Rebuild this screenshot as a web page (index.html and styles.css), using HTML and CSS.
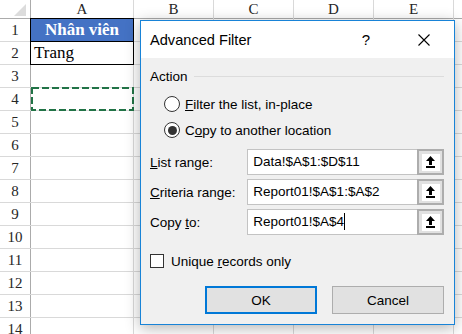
FILE: index.html
```html
<!DOCTYPE html>
<html lang="en">
<head>
  <meta charset="UTF-8">
  <title>Advanced Filter</title>
  <link rel="stylesheet" href="styles.css">
</head>
<body>

<div class="sheet">
  <div class="corner"><span class="corner-mark"></span></div>
  <div class="col-head">A</div>
  <div class="col-head">B</div>
  <div class="col-head">C</div>
  <div class="col-head">D</div>
  <div class="col-head">E</div>
  <div class="col-head"></div>

  <div class="row-head">1</div>
  <div class="cell cell-title">Nhân viên</div>
  <div class="cell"></div><div class="cell"></div><div class="cell"></div><div class="cell"></div><div class="cell"></div>

  <div class="row-head">2</div>
  <div class="cell cell-value">Trang</div>
  <div class="cell"></div><div class="cell"></div><div class="cell"></div><div class="cell"></div><div class="cell"></div>

  <div class="row-head">3</div>
  <div class="cell"></div><div class="cell"></div><div class="cell"></div><div class="cell"></div><div class="cell"></div><div class="cell"></div>

  <div class="row-head">4</div>
  <div class="cell cell-copy">
    <svg class="marquee" width="103" height="24" viewBox="0 0 103 24">
      <rect x="1" y="1" width="101" height="22" fill="none" stroke="#217346" stroke-width="2" stroke-dasharray="7 3"/>
    </svg>
  </div>
  <div class="cell"></div><div class="cell"></div><div class="cell"></div><div class="cell"></div><div class="cell"></div>

  <div class="row-head">5</div>
  <div class="cell"></div><div class="cell"></div><div class="cell"></div><div class="cell"></div><div class="cell"></div><div class="cell"></div>
  <div class="row-head">6</div>
  <div class="cell"></div><div class="cell"></div><div class="cell"></div><div class="cell"></div><div class="cell"></div><div class="cell"></div>
  <div class="row-head">7</div>
  <div class="cell"></div><div class="cell"></div><div class="cell"></div><div class="cell"></div><div class="cell"></div><div class="cell"></div>
  <div class="row-head">8</div>
  <div class="cell"></div><div class="cell"></div><div class="cell"></div><div class="cell"></div><div class="cell"></div><div class="cell"></div>
  <div class="row-head">9</div>
  <div class="cell"></div><div class="cell"></div><div class="cell"></div><div class="cell"></div><div class="cell"></div><div class="cell"></div>
  <div class="row-head">10</div>
  <div class="cell"></div><div class="cell"></div><div class="cell"></div><div class="cell"></div><div class="cell"></div><div class="cell"></div>
  <div class="row-head">11</div>
  <div class="cell"></div><div class="cell"></div><div class="cell"></div><div class="cell"></div><div class="cell"></div><div class="cell"></div>
  <div class="row-head">12</div>
  <div class="cell"></div><div class="cell"></div><div class="cell"></div><div class="cell"></div><div class="cell"></div><div class="cell"></div>
  <div class="row-head">13</div>
  <div class="cell"></div><div class="cell"></div><div class="cell"></div><div class="cell"></div><div class="cell"></div><div class="cell"></div>
  <div class="row-head">14</div>
  <div class="cell"></div><div class="cell"></div><div class="cell"></div><div class="cell"></div><div class="cell"></div><div class="cell"></div>

  <!-- Dialog over the sheet -->
  <div class="dialog">
    <div class="dialog-title">
      <span class="title-text">Advanced Filter</span>
      <span class="help">?</span>
      <svg class="close" width="12" height="12" viewBox="0 0 12 12">
        <path d="M0.5 0.5 L11.5 11.5 M11.5 0.5 L0.5 11.5" stroke="#000" stroke-width="1.1"/>
      </svg>
    </div>

    <div class="dialog-body">
      <div class="group-label">
        <span>Action</span>
        <span class="group-line"></span>
      </div>

      <label class="radio-row">
        <span class="radio"></span>
        <span><u>F</u>ilter the list, in-place</span>
      </label>
      <label class="radio-row">
        <span class="radio checked"></span>
        <span>C<u>o</u>py to another location</span>
      </label>

      <div class="fields">
        <div class="field">
          <span class="field-label"><u>L</u>ist range:</span>
          <span class="field-input">Data!$A$1:$D$11</span>
          <span class="pick-btn"><span class="pick-face">
            <svg width="9" height="12" viewBox="0 0 9 12"><path d="M4.5 0 L9 5 L0 5 Z M3 5 H6 V9 H3 Z M0 10 H9 V12 H0 Z" fill="#000"/></svg>
          </span></span>
        </div>
        <div class="field">
          <span class="field-label"><u>C</u>riteria range:</span>
          <span class="field-input">Report01!$A$1:$A$2</span>
          <span class="pick-btn"><span class="pick-face">
            <svg width="9" height="12" viewBox="0 0 9 12"><path d="M4.5 0 L9 5 L0 5 Z M3 5 H6 V9 H3 Z M0 10 H9 V12 H0 Z" fill="#000"/></svg>
          </span></span>
        </div>
        <div class="field">
          <span class="field-label">Copy <u>t</u>o:</span>
          <span class="field-input">Report01!$A$4<span class="caret"></span></span>
          <span class="pick-btn"><span class="pick-face">
            <svg width="9" height="12" viewBox="0 0 9 12"><path d="M4.5 0 L9 5 L0 5 Z M3 5 H6 V9 H3 Z M0 10 H9 V12 H0 Z" fill="#000"/></svg>
          </span></span>
        </div>
      </div>

      <label class="check-row">
        <span class="checkbox"></span>
        <span>Unique <u>r</u>ecords only</span>
      </label>

      <div class="buttons">
        <button class="btn btn-default">OK</button>
        <button class="btn">Cancel</button>
      </div>
    </div>
  </div>
</div>

</body>
</html>
```

FILE: styles.css
```css
* {
  margin: 0;
  padding: 0;
  box-sizing: border-box;
}

body {
  background: #fff;
  overflow: hidden;
  font-family: 'Liberation Sans', Arial, sans-serif;
}

/* Spreadsheet */
.sheet {
  position: relative;
  display: grid;
  grid-template-columns: 30px 102px 79px 79px 79px 79px 1fr;
  grid-auto-rows: 22px;
  grid-template-rows: 18px;
  gap: 1px;
  background: #d9d9d9;
  width: 462px;
  height: 334px;
  overflow: hidden;
  font-family: 'Liberation Serif', 'Times New Roman', serif;
}

.corner,
.col-head,
.row-head,
.cell {
  background: #fff;
}

.corner {
  display: flex;
  align-items: flex-end;
  justify-content: flex-end;
  padding: 0 4px 2px 0;
  box-shadow: 0 1px 0 #ababab, 1px 0 0 #ababab;
}

.corner-mark {
  width: 0;
  height: 0;
  border-left: 12px solid transparent;
  border-bottom: 12px solid #dcdcdc;
}

.col-head {
  font-size: 15px;
  color: #262626;
  text-align: center;
  line-height: 18px;
  box-shadow: 0 1px 0 #ababab;
}

.row-head {
  font-size: 15px;
  color: #262626;
  text-align: center;
  line-height: 22px;
  box-shadow: 1px 0 0 #ababab;
}

.cell {
  font-size: 17px;
  line-height: 22px;
  color: #000;
  white-space: nowrap;
}

.cell-title {
  background: #4472c4;
  color: #fff;
  font-weight: bold;
  text-align: center;
  box-shadow: 0 0 0 1px #000;
}

.cell-value {
  padding-left: 3px;
  box-shadow: 0 0 0 1px #000;
}

.cell-copy {
  position: relative;
}

.marquee {
  position: absolute;
  left: 0;
  top: -1px;
}

/* Dialog */
.dialog {
  position: absolute;
  left: 140px;
  top: 20px;
  width: 315px;
  height: 305px;
  border: 1px solid #1883d7;
  background: #f0f0f0;
  box-shadow: 0 3px 14px rgba(0, 0, 0, 0.3);
  font-family: 'Liberation Sans', Arial, sans-serif;
  font-size: 13.5px;
  color: #000;
}

.dialog-title {
  height: 37px;
  background: #fff;
  display: flex;
  align-items: center;
  padding-left: 9px;
}

.title-text {
  font-size: 14.6px;
  flex: 1;
}

.help {
  font-size: 15px;
  margin-right: 48px;
}

.close {
  margin-right: 24px;
}

.dialog-body {
  display: flex;
  flex-direction: column;
  padding: 9px 10px 0 9px;
}

.group-label {
  display: flex;
  align-items: center;
  height: 18px;
}

.group-line {
  flex: 1;
  height: 1px;
  background: #dcdcdc;
  margin-left: 6px;
}

.radio-row {
  display: flex;
  align-items: center;
  height: 26px;
  padding-left: 14px;
}

.group-label + .radio-row {
  margin-top: 6px;
}

.radio {
  width: 16px;
  height: 16px;
  border: 1px solid #333;
  border-radius: 50%;
  background: #fff;
  margin-right: 5px;
  display: flex;
  align-items: center;
  justify-content: center;
}

.radio.checked::after {
  content: '';
  width: 9px;
  height: 9px;
  border-radius: 50%;
  background: #333;
}

.fields {
  display: flex;
  flex-direction: column;
  gap: 4px;
  margin-top: 6px;
}

.field {
  display: flex;
  align-items: center;
  height: 26px;
}

.field-label {
  width: 98px;
}

.field-input {
  width: 171px;
  height: 26px;
  background: #fff;
  border: 1px solid #c3c3c3;
  border-right: none;
  padding-left: 5px;
  line-height: 24px;
  white-space: nowrap;
}

.caret {
  display: inline-block;
  width: 1px;
  height: 17px;
  background: #000;
  vertical-align: -4px;
}

.pick-btn {
  width: 27px;
  height: 26px;
  border: 2px solid #adadad;
  background: #e1e1e1;
  display: flex;
  align-items: center;
  justify-content: center;
}

.pick-face {
  width: 18px;
  height: 17px;
  background: #fff;
  display: flex;
  align-items: center;
  justify-content: center;
}

.check-row {
  display: flex;
  align-items: center;
  height: 20px;
  margin-top: 16px;
}

.checkbox {
  width: 14px;
  height: 14px;
  border: 1px solid #333;
  background: #fff;
  margin-right: 7px;
}

.buttons {
  display: flex;
  justify-content: flex-end;
  gap: 15px;
  margin-top: 15px;
}

.btn {
  width: 112px;
  height: 28px;
  background: #e1e1e1;
  border: 1px solid #adadad;
  font-family: 'Liberation Sans', Arial, sans-serif;
  font-size: 13.5px;
  color: #000;
}

.btn-default {
  border: 2px solid #0078d7;
}
```
